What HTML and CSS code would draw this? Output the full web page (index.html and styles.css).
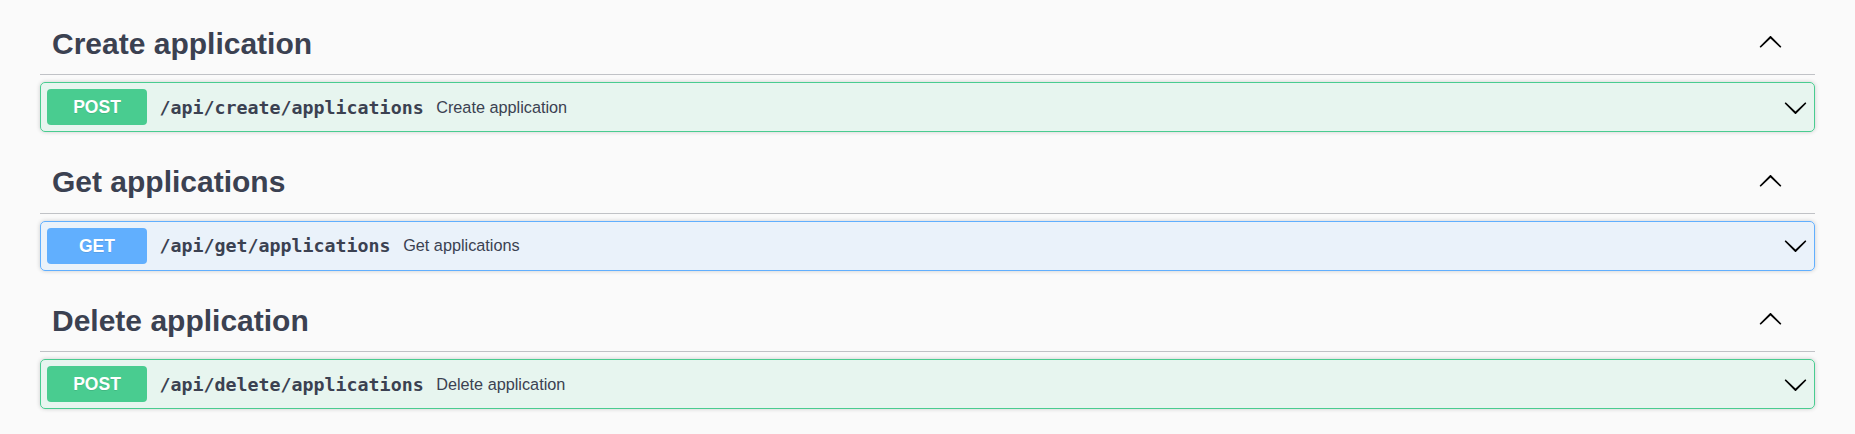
FILE: index.html
```html
<!DOCTYPE html>
<html>
<head>
<meta charset="utf-8">
<link rel="stylesheet" href="styles.css">
</head>
<body>
<div class="wrapper">
  <section class="tag-section">
    <h3 class="tag">
      <span class="tag-name">Create application</span>
      <svg class="arrow arrow-up" viewBox="0 0 20 20" width="25" height="25"><path d="M17.418 6.109c.272-.268.709-.268.979 0s.271.701 0 .969l-7.908 7.83c-.27.268-.707.268-.979 0l-7.908-7.830c-.27-.268-.27-.701 0-.969.271-.268.709-.268.979 0L10 13.25l7.418-7.141z"/></svg>
    </h3>
    <div class="opblock post">
      <span class="method">POST</span>
      <span class="path">/api/create/applications</span>
      <span class="desc">Create application</span>
      <svg class="arrow" viewBox="0 0 20 20" width="25" height="25"><path d="M17.418 6.109c.272-.268.709-.268.979 0s.271.701 0 .969l-7.908 7.83c-.27.268-.707.268-.979 0l-7.908-7.83c-.27-.268-.27-.701 0-.969.271-.268.709-.268.979 0L10 13.25l7.418-7.141z"/></svg>
    </div>
  </section>
  <section class="tag-section">
    <h3 class="tag">
      <span class="tag-name">Get applications</span>
      <svg class="arrow arrow-up" viewBox="0 0 20 20" width="25" height="25"><path d="M17.418 6.109c.272-.268.709-.268.979 0s.271.701 0 .969l-7.908 7.83c-.27.268-.707.268-.979 0l-7.908-7.83c-.27-.268-.27-.701 0-.969.271-.268.709-.268.979 0L10 13.25l7.418-7.141z"/></svg>
    </h3>
    <div class="opblock get">
      <span class="method">GET</span>
      <span class="path">/api/get/applications</span>
      <span class="desc">Get applications</span>
      <svg class="arrow" viewBox="0 0 20 20" width="25" height="25"><path d="M17.418 6.109c.272-.268.709-.268.979 0s.271.701 0 .969l-7.908 7.83c-.27.268-.707.268-.979 0l-7.908-7.83c-.27-.268-.27-.701 0-.969.271-.268.709-.268.979 0L10 13.25l7.418-7.141z"/></svg>
    </div>
  </section>
  <section class="tag-section">
    <h3 class="tag">
      <span class="tag-name">Delete application</span>
      <svg class="arrow arrow-up" viewBox="0 0 20 20" width="25" height="25"><path d="M17.418 6.109c.272-.268.709-.268.979 0s.271.701 0 .969l-7.908 7.83c-.27.268-.707.268-.979 0l-7.908-7.83c-.27-.268-.27-.701 0-.969.271-.268.709-.268.979 0L10 13.25l7.418-7.141z"/></svg>
    </h3>
    <div class="opblock post">
      <span class="method">POST</span>
      <span class="path">/api/delete/applications</span>
      <span class="desc">Delete application</span>
      <svg class="arrow" viewBox="0 0 20 20" width="25" height="25"><path d="M17.418 6.109c.272-.268.709-.268.979 0s.271.701 0 .969l-7.908 7.83c-.27.268-.707.268-.979 0l-7.908-7.83c-.27-.268-.27-.701 0-.969.271-.268.709-.268.979 0L10 13.25l7.418-7.141z"/></svg>
    </div>
  </section>
</div>
</body>
</html>
```

FILE: styles.css
```css
html, body {
  margin: 0;
  padding: 0;
  background: #fafafa;
}

.wrapper {
  padding: 14px 40px 0 40px;
  font-family: "Liberation Sans", Arial, sans-serif;
  color: #3b4151;
}

.tag-section {
  display: flex;
  flex-direction: column;
}

.tag {
  display: flex;
  align-items: center;
  margin: 0 0 7px 0;
  padding: 11.5px 32px 13.5px 12px;
  border-bottom: 1px solid rgba(59, 65, 81, 0.3);
  font-size: 30px;
  line-height: 35px;
  font-weight: 700;
  color: #3b4151;
}

.tag-name {
  flex: 1;
}

.arrow {
  flex: none;
  fill: #000;
}

.arrow-up {
  transform: rotate(180deg);
  margin-bottom: 1px;
}

.opblock {
  display: flex;
  align-items: center;
  margin: 0 0 20.5px 0;
  padding: 6px 6px 6px 6px;
  border: 1px solid #49cc90;
  border-radius: 5px;
  box-shadow: 0 0 4px rgba(0, 0, 0, 0.19);
}

.opblock.post {
  background: rgba(73, 204, 144, 0.1);
  border-color: #49cc90;
}

.opblock.get {
  background: rgba(97, 175, 254, 0.1);
  border-color: #61affe;
}

.method {
  flex: none;
  width: 100px;
  height: 36px;
  line-height: 36px;
  text-align: center;
  border-radius: 4px;
  color: #fff;
  font-size: 17.5px;
  font-weight: 700;
  text-shadow: 0 1px 0 rgba(0, 0, 0, 0.1);
}

.post .method {
  background: #49cc90;
}

.get .method {
  background: #61affe;
}

.path {
  padding: 0 12.5px;
  font-family: "DejaVu Sans Mono", "Liberation Mono", monospace;
  font-size: 18.3px;
  font-weight: 700;
  color: #3b4151;
}

.desc {
  flex: 1;
  font-size: 16.25px;
  color: #3b4151;
}
```
